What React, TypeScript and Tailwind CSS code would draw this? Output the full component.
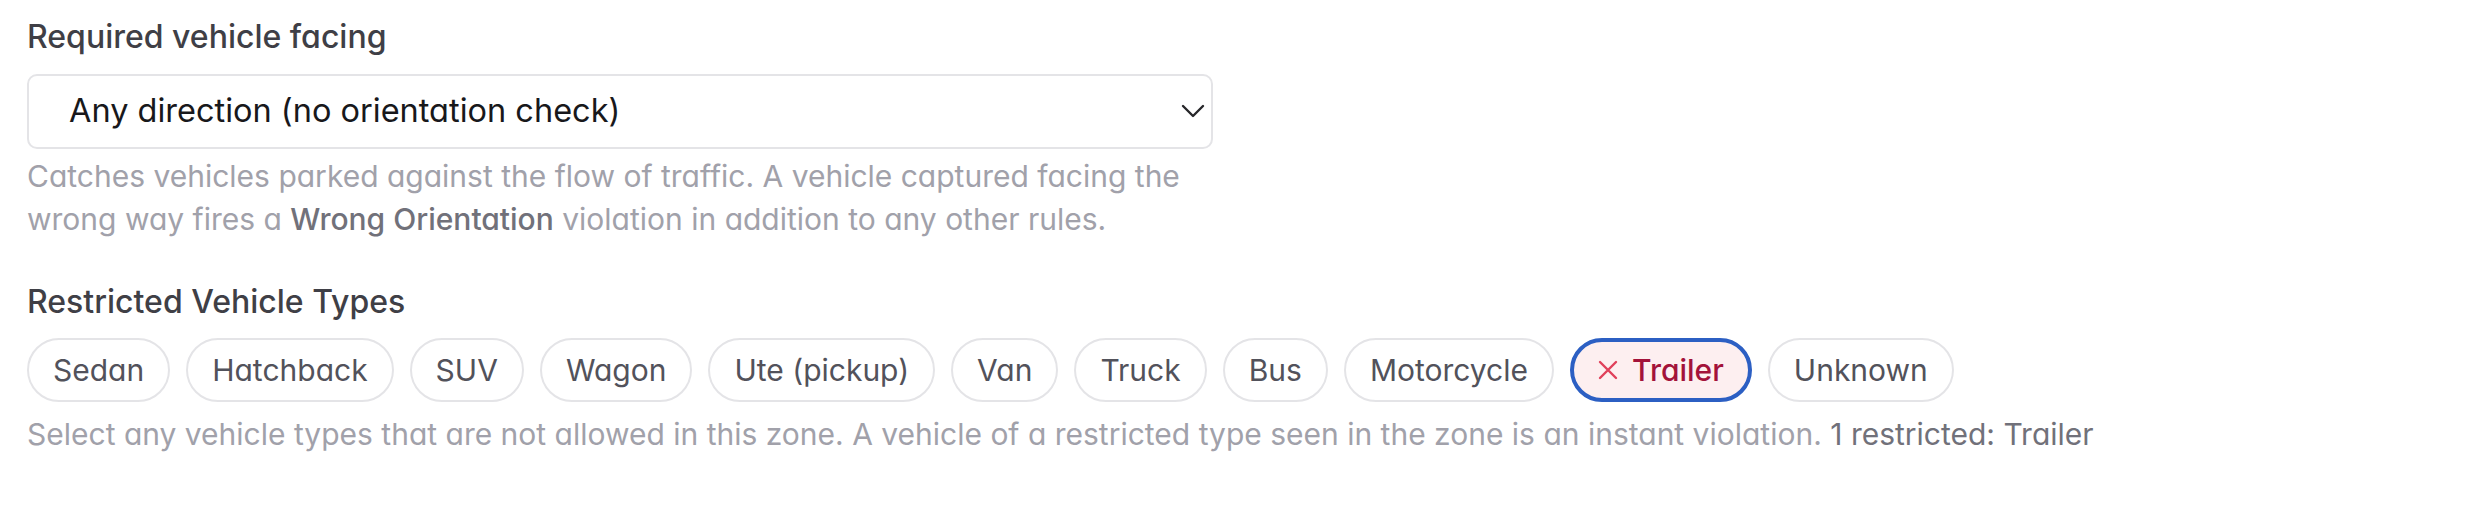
import React from "react";

const TYPES = ["Sedan", "Hatchback", "SUV", "Wagon", "Ute (pickup)", "Van", "Truck", "Bus", "Motorcycle", "Trailer", "Unknown"];

export default function App() {
  return (
    <div
      className="min-h-[514px] w-[2470px] bg-white px-[27px] pt-[14px] text-[#3f3f46]"
      style={{ fontFamily: "Inter, 'Noto Sans', sans-serif", fontFeatureSettings: "'cv11'" }}
    >
      <div className="text-[32px] leading-[45px] font-medium text-[#3f3f46]">Required vehicle facing</div>
      <div className="relative mt-[15px] w-[1186px]">
        <select
          className="h-[75px] w-full appearance-none rounded-[10px] border-2 border-[#e4e4e7] bg-white pl-[40px] text-[32.5px] text-[#18181b] outline-none"
          defaultValue="any"
        >
          <option value="any">Any direction (no orientation check)</option>
        </select>
        <svg
          className="pointer-events-none absolute right-[8px] top-[30px]"
          width="24"
          height="14"
          viewBox="0 0 24 14"
          fill="none"
        >
          <path d="M2 2 L12 12 L22 2" stroke="#27272a" strokeWidth="2.4" strokeLinecap="round" strokeLinejoin="round" />
        </svg>
      </div>
      <div className="mt-[6px] w-[1220px] text-[30px] leading-[43px] text-[#a1a1aa]">
        Catches vehicles parked against the flow of traffic. A vehicle captured facing the wrong way fires a{" "}
        <span className="font-medium text-[#71717a]">Wrong Orientation</span> violation in addition to any other rules.
      </div>
      <div className="mt-[38px] text-[32px] leading-[45px] font-medium text-[#3f3f46]">Restricted Vehicle Types</div>
      <div className="mt-[14px] flex flex-wrap gap-[16px]">
        {TYPES.map((t) =>
          t === "Trailer" ? (
            <button
              key={t}
              className="flex h-[64px] items-center gap-[14px] rounded-full border-[4px] border-[#2c5fc3] bg-[#fdeff0] pl-[24px] pr-[24px] text-[30px] font-medium text-[#a3123a]"
            >
              <svg width="20" height="20" viewBox="0 0 20 20" fill="none">
                <path d="M2 2 L18 18 M18 2 L2 18" stroke="#e0405a" strokeWidth="2.4" strokeLinecap="round" />
              </svg>
              <span>{t}</span>
            </button>
          ) : (
            <button
              key={t}
              className="flex h-[64px] items-center rounded-full border-2 border-[#e4e4e7] bg-white px-[24px] text-[30px] text-[#52525b]"
            >
              {t}
            </button>
          )
        )}
      </div>
      <div className="mt-[11px] text-[30px] leading-[43px] text-[#a1a1aa]">
        Select any vehicle types that are not allowed in this zone. A vehicle of a restricted type seen in the zone is an
        instant violation. <span className="text-[#71717a]">1 restricted: Trailer</span>
      </div>
    </div>
  );
}
